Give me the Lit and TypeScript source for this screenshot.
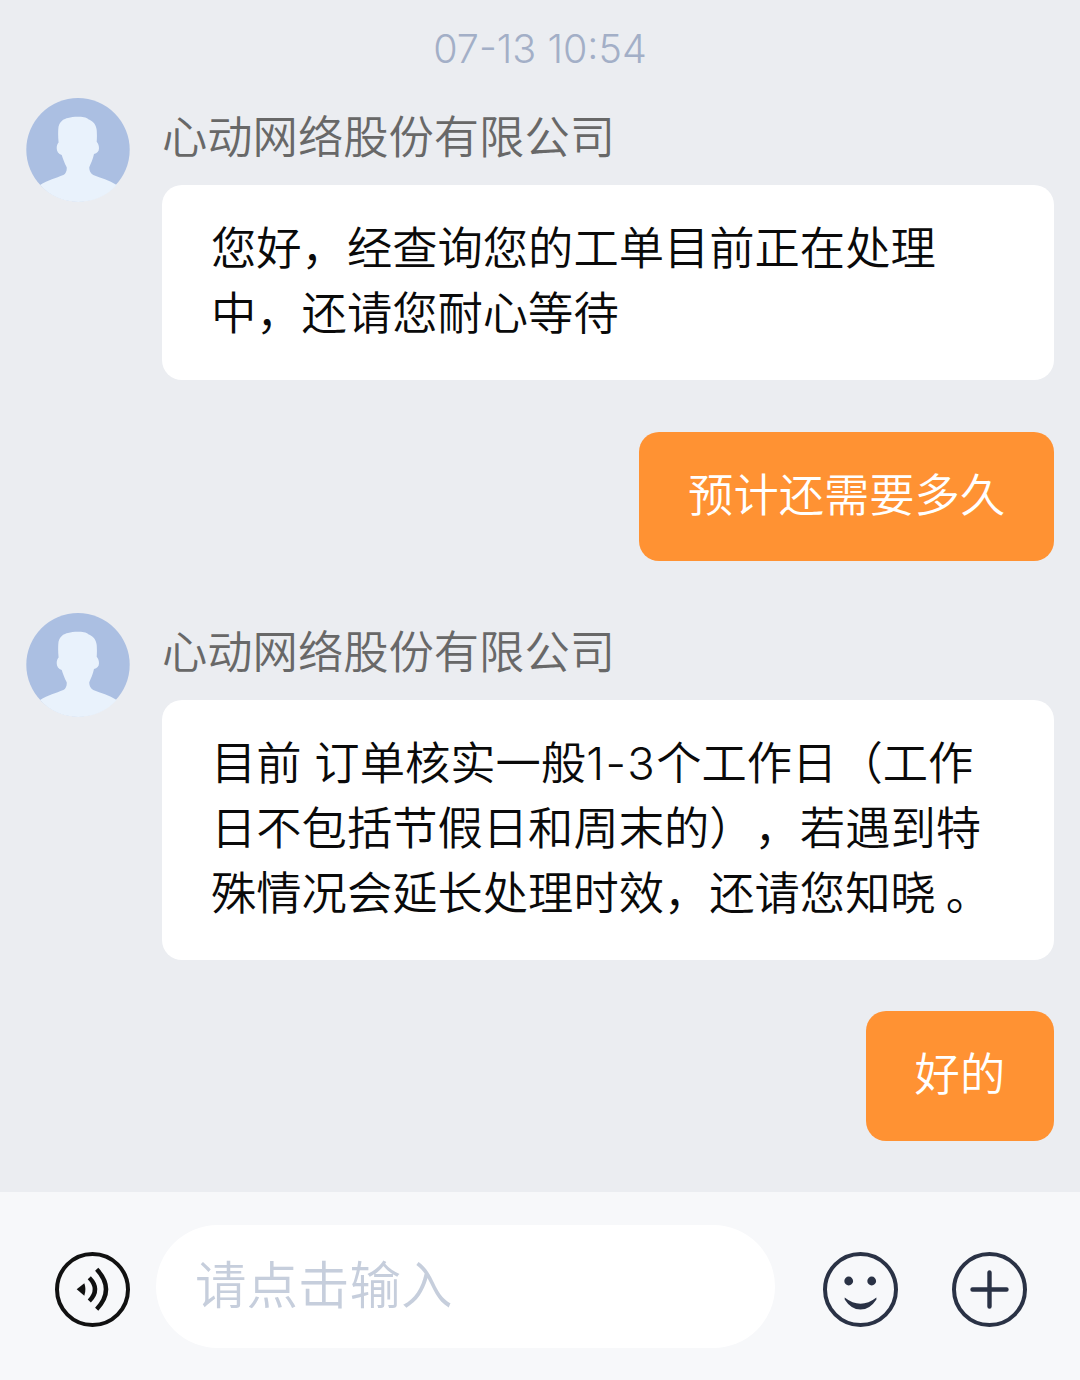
import { LitElement, html, css, svg } from "lit";
import { customElement } from "lit/decorators.js";

const avatar = html`<svg class="avatar" viewBox="0 0 104 104" aria-hidden="true">
  <circle cx="52" cy="51.8" r="51.7" fill="#abbfe2"/>
  <path fill="#e9f2fc" d="M14 87 C22 82 30 80 37.3 77 C40 75.5 41 72.5 40.7 69.3 C38.5 65 37 61 35.7 57 C32.5 56 30.7 53.5 30.7 50.3 C30.7 47.5 31.5 45.5 32.6 44.5 C32 39 32 33 32.5 28.7 C34 23 38 20.8 42 20 C45 19 48 18.7 51.7 18.7 C56 18.7 60.5 19 62.3 21.3 C67 23 70.3 27 70.7 32 C71 36 71 40 70.7 43.7 C72.3 45.5 73 47.8 73 50.3 C73 53.5 71 55.5 68 56 C67 61 65 65 63.3 69.3 C63 72.5 64.5 75.5 67.3 77 C75 80 83 82 90.7 87 A52 52 0 0 1 14 87 Z"/>
</svg>`;

const icon = (content: unknown) => html`<svg class="icon" viewBox="0 0 75 75" aria-hidden="true">${content}</svg>`;

@customElement("app-root")
export class AppRoot extends LitElement {
  static styles = css`
    :host {
      display: flex;
      flex-direction: column;
      width: 1080px;
      height: 1380px;
      overflow: hidden;
      background: #ebedf1;
      font-family: Inter, "Noto Sans CJK SC", "Noto Sans", sans-serif;
      font-weight: 350;
      text-spacing-trim: space-all;
    }
    .chat {
      flex: 1;
      display: flex;
      flex-direction: column;
      padding: 0 26px;
    }
    .time {
      height: 98px;
      padding-bottom: 1px;
      box-sizing: border-box;
      display: flex;
      align-items: center;
      justify-content: center;
      font-weight: 300;
      font-size: 39.5px;
      color: #a3afc7;
    }
    .incoming {
      display: grid;
      grid-template-columns: 104px 892px;
      column-gap: 32px;
    }
    .avatar {
      display: block;
      width: 104px;
      height: 104px;
    }
    .name {
      height: 87px;
      font-size: 45.3px;
      line-height: 80px;
      color: #686868;
      white-space: nowrap;
    }
    .bubble {
      font-size: 45.3px;
      line-height: 65px;
      white-space: nowrap;
    }
    .white {
      background: #fff;
      color: #0a0a0a;
      border-radius: 20px;
      padding: 31px 49px 34px;
    }
    .orange {
      align-self: flex-end;
      background: #ff9233;
      color: #fff;
      border-radius: 20px;
      padding: 31px 48.8px 33.4px;
      margin-top: 51.5px;
    }
    .gap-in { margin-top: 52px; }
    .num { letter-spacing: 1.6px; }
    .stop { margin-left: 10px; }
    .footer {
      height: 188px;
      flex: none;
      box-sizing: border-box;
      background: #f7f8fa;
      display: flex;
      align-items: flex-start;
      padding: 33px 53px 0 55px;
    }
    .icon {
      display: block;
      width: 75px;
      height: 75px;
      flex: none;
      margin-top: 27px;
    }
    .input {
      flex: none;
      width: 619px;
      height: 123px;
      margin: 0 48px 0 26px;
      border-radius: 62px;
      background: #fff;
      box-sizing: border-box;
      padding: 0 0 10px 39px;
      display: flex;
      align-items: center;
      font-size: 51.5px;
      color: #c6cedc;
    }
    .plus { margin-left: 54px; }
  `;

  render() {
    return html`
      <div class="chat">
        <div class="time">07-13 10:54</div>
        <div class="incoming">
          ${avatar}
          <div>
            <div class="name">心动网络股份有限公司</div>
            <div class="bubble white">您好，经查询您的工单目前正在处理<br />中，还请您耐心等待</div>
          </div>
        </div>
        <div class="bubble orange">预计还需要多久</div>
        <div class="incoming gap-in">
          ${avatar}
          <div>
            <div class="name">心动网络股份有限公司</div>
            <div class="bubble white">目前 订单核实一般<span class="num">1-3</span>个工作日（工作<br />日不包括节假日和周末的），若遇到特<br />殊情况会延长处理时效，还请您知晓<span class="stop">。</span></div>
          </div>
        </div>
        <div class="bubble orange">好的</div>
      </div>
      <div class="footer">
        ${icon(svg`
          <circle cx="37.5" cy="37.5" r="35.5" fill="none" stroke="#111" stroke-width="4"/>
          <path fill="#111" d="M21.7 37.3 L29.3 31.3 Q31.6 37.3 29.3 43.7 Z"/>
          <path fill="none" stroke="#111" stroke-width="4.4" d="M34.3 25.7 Q45.7 37.3 34.3 49"/>
          <path fill="none" stroke="#111" stroke-width="4.4" d="M41.7 17.3 Q60.3 37.3 41.7 57.3"/>
        `)}
        <div class="input">请点击输入</div>
        ${icon(svg`
          <circle cx="37.5" cy="37.5" r="35.5" fill="none" stroke="#2a3245" stroke-width="4"/>
          <circle cx="25.7" cy="29" r="4.4" fill="#2a3245"/>
          <circle cx="48.7" cy="29" r="4.4" fill="#2a3245"/>
          <path fill="#2a3245" d="M21.7 45.5 Q37.5 58 53.4 45.5 L53.4 47.5 Q47 57.5 37.5 57.5 Q28 57.5 21.7 47.5 Z"/>
        `)}
        <div class="plus">
          ${icon(svg`
            <circle cx="37.5" cy="37.5" r="35.5" fill="none" stroke="#2a3245" stroke-width="4"/>
            <path fill="none" stroke="#2a3245" stroke-width="4.4" stroke-linecap="round" d="M20.5 37.5 H54.5 M37.5 20.5 V54.5"/>
          `)}
        </div>
      </div>
    `;
  }
}
